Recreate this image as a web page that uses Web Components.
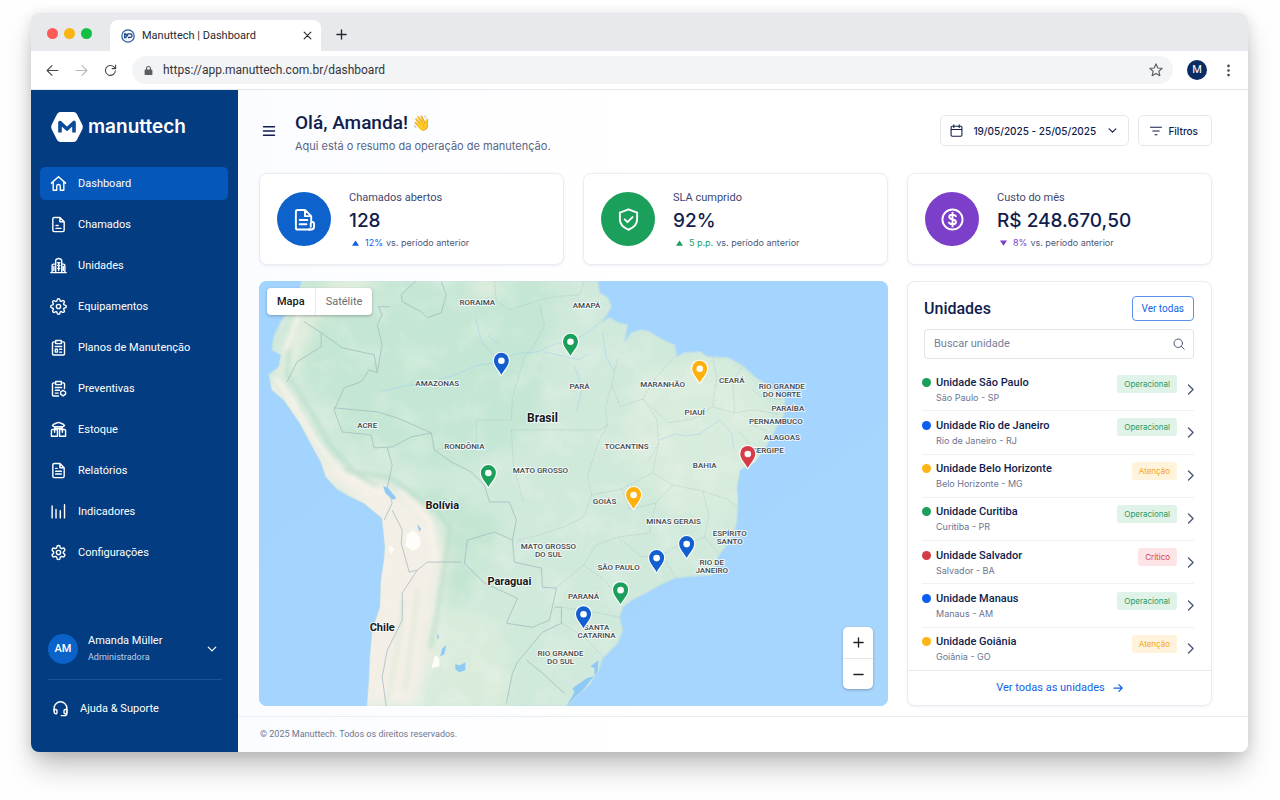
<!DOCTYPE html>
<html lang="pt-BR">
<head>
<meta charset="utf-8">
<meta name="viewport" content="width=device-width, initial-scale=1">
<title>Manuttech | Dashboard</title>
<style>
  :root {
    --font-ui: Roboto, "Noto Sans", sans-serif;
    --font-alt: Inter, "Noto Sans", sans-serif;
    --navy: #101d4d;
    --slate: #5a6585;
    --line: #e9ecf3;
    --blue: #0b5ff0;
    --blue-deep: #0d63cb;
    --green: #1ba05b;
    --amber: #fdb515;
    --red: #d13c46;
    --purple: #7c3fc9;
    --sidebar: #033c80;
  }
  * { box-sizing: border-box; }
  body {
    margin: 0;
    min-height: 100vh;
    padding: 13px 32px 48px 31px;
    background: #fefefe;
    color: var(--navy);
    font: 11px/16px var(--font-ui);
  }
</style>
</head>
<body>
<browser-window>
  <browser-tabs slot="tabs">Manuttech | Dashboard</browser-tabs>
  <browser-toolbar slot="toolbar" url="https://app.manuttech.com.br/dashboard"></browser-toolbar>
  <app-shell>
    <app-sidebar slot="sidebar">
      <nav-item icon="home" active>Dashboard</nav-item>
      <nav-item icon="ticket">Chamados</nav-item>
      <nav-item icon="buildings">Unidades</nav-item>
      <nav-item icon="gear8">Equipamentos</nav-item>
      <nav-item icon="plan">Planos de Manutenção</nav-item>
      <nav-item icon="preventive">Preventivas</nav-item>
      <nav-item icon="stock">Estoque</nav-item>
      <nav-item icon="report">Relatórios</nav-item>
      <nav-item icon="bars">Indicadores</nav-item>
      <nav-item icon="gear6">Configurações</nav-item>
    </app-sidebar>
    <page-header slot="header">
      <span slot="title">Olá, Amanda!</span>
      <span slot="subtitle">Aqui está o resumo da operação de manutenção.</span>
    </page-header>
    <stat-card tone="blue" icon="doc" trend="up">
      <span slot="label">Chamados abertos</span>
      <span slot="value">128</span>
      <span slot="delta">12%</span>
    </stat-card>
    <stat-card tone="green" icon="shield" trend="up">
      <span slot="label">SLA cumprido</span>
      <span slot="value">92%</span>
      <span slot="delta">5 p.p.</span>
    </stat-card>
    <stat-card tone="purple" icon="money" trend="down">
      <span slot="label">Custo do mês</span>
      <span slot="value">R$ 248.670,50</span>
      <span slot="delta">8%</span>
    </stat-card>
    <units-map></units-map>
    <units-panel>
      <unit-row tone="green" status="ok"><span slot="name">Unidade São Paulo</span><span slot="place">São Paulo - SP</span>Operacional</unit-row>
      <unit-row tone="blue" status="ok"><span slot="name">Unidade Rio de Janeiro</span><span slot="place">Rio de Janeiro - RJ</span>Operacional</unit-row>
      <unit-row tone="amber" status="warn"><span slot="name">Unidade Belo Horizonte</span><span slot="place">Belo Horizonte - MG</span>Atenção</unit-row>
      <unit-row tone="green" status="ok"><span slot="name">Unidade Curitiba</span><span slot="place">Curitiba - PR</span>Operacional</unit-row>
      <unit-row tone="red" status="crit"><span slot="name">Unidade Salvador</span><span slot="place">Salvador - BA</span>Crítico</unit-row>
      <unit-row tone="blue" status="ok"><span slot="name">Unidade Manaus</span><span slot="place">Manaus - AM</span>Operacional</unit-row>
      <unit-row tone="amber" status="warn"><span slot="name">Unidade Goiânia</span><span slot="place">Goiânia - GO</span>Atenção</unit-row>
    </units-panel>
    <span slot="footer">© 2025 Manuttech. Todos os direitos reservados.</span>
  </app-shell>
</browser-window>

<script>
const BASE = `
  *, *::before, *::after { box-sizing: border-box; }
  button, input, select { font: inherit; color: inherit; margin: 0; padding: 0; border: 0; background: none; }
  button { cursor: pointer; }
  a { color: inherit; text-decoration: none; }
`;

function define(name, render, wire) {
  customElements.define(name, class extends HTMLElement {
    connectedCallback() {
      if (this.shadowRoot) return;
      const root = this.attachShadow({ mode: 'open' });
      const tpl = document.createElement('template');
      const [css, html] = render(this);
      tpl.innerHTML = `<style>${BASE}${css}</style>${html}`;
      root.append(tpl.content.cloneNode(true));
      if (wire) wire(this, root);
    }
  });
}

const GEAR8 = 'M19.4 15a1.65 1.65 0 0 0 .33 1.82l.06.06a2 2 0 0 1 0 2.83 2 2 0 0 1-2.83 0l-.06-.06a1.65 1.65 0 0 0-1.82-.33 1.65 1.65 0 0 0-1 1.51V21a2 2 0 0 1-2 2 2 2 0 0 1-2-2v-.09A1.65 1.65 0 0 0 9 19.4a1.65 1.65 0 0 0-1.82.33l-.06.06a2 2 0 0 1-2.83 0 2 2 0 0 1 0-2.83l.06-.06a1.65 1.65 0 0 0 .33-1.82 1.65 1.65 0 0 0-1.51-1H3a2 2 0 0 1-2-2 2 2 0 0 1 2-2h.09A1.65 1.65 0 0 0 4.6 9a1.65 1.65 0 0 0-.33-1.82l-.06-.06a2 2 0 0 1 0-2.83 2 2 0 0 1 2.83 0l.06.06a1.65 1.65 0 0 0 1.82.33H9a1.65 1.65 0 0 0 1-1.51V3a2 2 0 0 1 2-2 2 2 0 0 1 2 2v.09a1.65 1.65 0 0 0 1 1.51 1.65 1.65 0 0 0 1.82-.33l.06-.06a2 2 0 0 1 2.83 0 2 2 0 0 1 0 2.83l-.06.06a1.65 1.65 0 0 0-.33 1.82V9a1.65 1.65 0 0 0 1.51 1H21a2 2 0 0 1 2 2 2 2 0 0 1-2 2h-.09a1.65 1.65 0 0 0-1.51 1z';
const GEAR6 = 'M12.22 2h-.44a2 2 0 0 0-2 2v.18a2 2 0 0 1-1 1.73l-.43.25a2 2 0 0 1-2 0l-.15-.08a2 2 0 0 0-2.73.73l-.22.38a2 2 0 0 0 .73 2.73l.15.1a2 2 0 0 1 1 1.72v.51a2 2 0 0 1-1 1.74l-.15.09a2 2 0 0 0-.73 2.73l.22.38a2 2 0 0 0 2.73.73l.15-.08a2 2 0 0 1 2 0l.43.25a2 2 0 0 1 1 1.73V20a2 2 0 0 0 2 2h.44a2 2 0 0 0 2-2v-.18a2 2 0 0 1 1-1.73l.43-.25a2 2 0 0 1 2 0l.15.08a2 2 0 0 0 2.73-.73l.22-.39a2 2 0 0 0-.73-2.73l-.15-.08a2 2 0 0 1-1-1.74v-.5a2 2 0 0 1 1-1.74l.15-.09a2 2 0 0 0 .73-2.73l-.22-.38a2 2 0 0 0-2.73-.73l-.15.08a2 2 0 0 1-2 0l-.43-.25a2 2 0 0 1-1-1.73V4a2 2 0 0 0-2-2z';

const ICONS = {
  home: '<path d="M2 11.5 12 2.5l10 9M4.5 9.5V21.5h5V16a2.5 2.5 0 0 1 5 0v5.5h5V9.5"/>',
  ticket: '<path d="M14 2H6a2 2 0 0 0-2 2v16a2 2 0 0 0 2 2h12a2 2 0 0 0 2-2V8zM14 2v6h6M8.5 13.5h3M8.5 17.5h7"/>',
  buildings: '<path d="M1 22h22M8 22V5a2 2 0 0 1 1.2-1.8L12 2l3.2 1.2A2 2 0 0 1 16.5 5V22M3 22V12a2 2 0 0 1 2-2h3M16.5 10H19a2 2 0 0 1 2 2v10M5.5 13.5V19M18.8 13.5V19"/><path d="M10.8 8h3M10.8 12h3M10.8 16h3M12.3 8v11"/>',
  gear8: `<circle cx="12" cy="12" r="3"/><path d="${GEAR8}"/>`,
  gear6: `<circle cx="12" cy="12" r="3"/><path d="${GEAR6}"/>`,
  plan: '<path d="M8 4H5a1.5 1.5 0 0 0-1.5 1.5V21A1.5 1.5 0 0 0 5 22.5h14a1.5 1.5 0 0 0 1.5-1.5V5.5A1.5 1.5 0 0 0 19 4h-3M8 2h8v4.5H8zM7.5 10.5h9M7.5 14.5h3v4h-3zM13.5 14.5h3M13.5 18.5h3"/>',
  preventive: '<path d="M8 4H5a1.5 1.5 0 0 0-1.5 1.5V21A1.5 1.5 0 0 0 5 22.5h7M20.5 12V5.5A1.5 1.5 0 0 0 19 4h-3M8 2h8v4.5H8zM7.5 10.5h9M7.5 14.5h6M7.5 18.5h4"/><path d="M18.5 14.5 22 17v3l-3.5 2.5L15 20v-3z"/>',
  stock: '<path d="M3.5 6.5q1-2 4-3L12 2l4.5 1.5q3 1 4 3-1 1.5-3 1.5h-11q-2 0-3-1.5zM6.5 8v2.5h11V8M3.5 12h7v9.5H2v-8a1.5 1.5 0 0 1 1.5-1.5zM13.5 12h7a1.5 1.5 0 0 1 1.5 1.5v8h-8.5zM6.5 12v4M17.5 12v4"/>',
  report: '<path d="M14 2H6a2 2 0 0 0-2 2v16a2 2 0 0 0 2 2h12a2 2 0 0 0 2-2V8zM14 2v6h6M8 9h2M8 13h8M8 17h8"/>',
  bars: '<path d="M3 4v17M8.5 9v12M14.5 11v10M20.5 2.5V21"/>',
  headset: '<path d="M3 15v-3.5a9 9 0 0 1 18 0V19a3 3 0 0 1-3 3h-5"/><path d="M3 13.5h2.5A1.5 1.5 0 0 1 7 15v3a1.5 1.5 0 0 1-1.5 1.5A2.5 2.5 0 0 1 3 17zM21 13.5h-2.5A1.5 1.5 0 0 0 17 15v3a1.5 1.5 0 0 0 1.5 1.5A2.5 2.5 0 0 0 21 17z"/>',
  down: '<path d="m3 7.5 9 9 9-9"/>',
  right: '<path d="m12 2 10 10-10 10"/>',
  arrow: '<path d="M2 12h20M14 4l8 8-8 8"/>',
  back: '<path d="M22 12H2M11 3l-9 9 9 9"/>',
  forward: '<path d="M2 12h20M13 3l9 9-9 9"/>',
  reload: '<path d="M21 12.5A9.2 9.2 0 1 1 18.5 5.5L21 8M21.5 2v6.5H15"/>',
  lock: '<path fill="currentColor" stroke="none" d="M5 10h1.5V7.5a5.5 5.5 0 0 1 11 0V10H19a1.5 1.5 0 0 1 1.5 1.5v9A1.5 1.5 0 0 1 19 22H5a1.5 1.5 0 0 1-1.5-1.5v-9A1.5 1.5 0 0 1 5 10zm4 0h6V7.5a3 3 0 0 0-6 0z"/>',
  star: '<path d="m12 1.5 3.1 7 7.5.7-5.7 5 1.7 7.5L12 17.8l-6.6 3.9 1.7-7.5-5.7-5 7.5-.7z"/>',
  kebab: '<g fill="currentColor" stroke="none"><circle cx="12" cy="3.5" r="2.4"/><circle cx="12" cy="12" r="2.4"/><circle cx="12" cy="20.5" r="2.4"/></g>',
  close: '<path d="m3 3 18 18M21 3 3 21"/>',
  plus: '<path d="M12 2v20M2 12h20"/>',
  minus: '<path d="M2 12h20"/>',
  menu: '<path d="M1 3.5h22M1 12h22M1 20.5h22"/>',
  calendar: '<path d="M4 4h16a2 2 0 0 1 2 2V20.5a2 2 0 0 1-2 2H4a2 2 0 0 1-2-2V6a2 2 0 0 1 2-2zM2 10h20M7 1.5v5M17 1.5v5"/>',
  filter: '<path d="M1 4.5h22M5.5 12h13M10 19.5h4"/>',
  search: '<circle cx="10.5" cy="10.5" r="8.5"/><path d="m17 17 5.5 5.5"/>',
  doc: '<path d="M12 2H5a2 2 0 0 0-2 2v16.5a2 2 0 0 0 2 2h13M12.5 2 19 8.5v5M12.5 2v6.5H19M7 12.5h8M7 17h7"/><path d="M16.5 22.5h2.3a3.2 3.2 0 0 0 3.2-3.2V16a1.8 1.8 0 0 0-3.5 0v3.5"/>',
  shield: '<path d="M12 1.5 21 4.8v7c0 5-3.5 8.7-9 10.9-5.5-2.2-9-5.9-9-10.9v-7z"/><path d="m8 11.8 3 3 5.2-5.3"/>',
  money: '<circle cx="12" cy="12" r="10.5"/><path d="M15.5 8.5c-.7-1-1.9-1.5-3.5-1.5-2 0-3.4.9-3.4 2.4 0 3.4 7 1.7 7 5.1 0 1.6-1.5 2.5-3.6 2.5-1.7 0-3.1-.6-3.8-1.8M12 4.8v14.4"/>'
};

define('app-icon', el => [`
  :host { display: inline-flex; flex: none; width: var(--size, 16px); height: var(--size, 16px); }
  svg { width: 100%; height: 100%; fill: none; stroke: currentColor; stroke-width: var(--stroke, 2); stroke-linecap: round; stroke-linejoin: round; overflow: visible; }
`, `<svg viewBox="0 0 24 24" aria-hidden="true">${ICONS[el.getAttribute('name')] || ''}</svg>`]);

define('browser-window', () => [`
  :host {
    display: flex; flex-direction: column; min-height: calc(100vh - 61px);
    border-radius: 8px; overflow: hidden; background: #fff;
    box-shadow: 0 18px 28px -4px rgba(20, 20, 25, .26), 0 2px 14px rgba(20, 20, 25, .12);
  }
`, `<slot name="tabs"></slot><slot name="toolbar"></slot><slot></slot>`]);

define('browser-tabs', () => [`
  :host { display: flex; height: 38px; padding: 7px 16px 0; background: #e8e9ec; color: #26292e; }
  .lights { display: flex; gap: 6px; width: 63px; padding-top: 8px; }
  .lights i { width: 11px; height: 11px; border-radius: 50%; background: #fc5b57; }
  .lights i:nth-child(2) { background: #f9b514; }
  .lights i:nth-child(3) { background: #14c044; }
  .tab { display: flex; align-items: center; gap: 7px; width: 211px; padding: 0 9px 0 11px; border-radius: 8px 8px 0 0; background: #fff; }
  .tab span { flex: 1; }
  .tab svg { width: 14px; height: 14px; flex: none; }
  button { display: flex; align-items: center; justify-content: center; width: 10px; --size: 9px; --stroke: 3; }
  .new { width: 40px; padding-bottom: 2px; --size: 11px; --stroke: 3; }
`, `
  <div class="lights" aria-hidden="true"><i></i><i></i><i></i></div>
  <div class="tab">
    <svg viewBox="0 0 14 14" aria-hidden="true"><circle cx="7" cy="7" r="6.2" fill="#f4f8fd" stroke="#2a5a9c" stroke-width="1.2"/><path d="M3.7 9.3V4.9h1l1.3 2 1-2h2.4a1.5 1.5 0 0 1 0 3.4H7.6v1M5 7.5v1.8" fill="none" stroke="#17427f" stroke-width="1.3"/></svg>
    <span><slot></slot></span>
    <button aria-label="Fechar aba"><app-icon name="close"></app-icon></button>
  </div>
  <button class="new" aria-label="Nova aba"><app-icon name="plus"></app-icon></button>
`]);

define('browser-toolbar', el => [`
  :host { display: flex; align-items: center; gap: 14px; height: 39px; padding: 0 12px 0 14px; border-bottom: 1px solid #e3e6ea; background: #fff; color: #45494f; --size: 13px; }
  button { display: flex; width: 15px; justify-content: center; }
  .off { color: #b4b8bd; }
  .url { display: flex; flex: 1; align-items: center; gap: 9px; height: 28px; padding: 0 10px 0 11px; border-radius: 14px; background: #f3f4f6; }
  .url app-icon { --size: 11px; color: #5b5f65; }
  .url input { flex: 1; min-width: 0; color: #33363b; outline: none; font-size: 12px; }
  .url button app-icon { --size: 14px; --stroke: 2; }
  .me { width: 20px; height: 20px; align-items: center; border-radius: 50%; background: #0a2c62; color: #fff; }
`, `
  <button aria-label="Voltar"><app-icon name="back"></app-icon></button>
  <button class="off" aria-label="Avançar"><app-icon name="forward"></app-icon></button>
  <button aria-label="Recarregar"><app-icon name="reload"></app-icon></button>
  <div class="url">
    <app-icon name="lock"></app-icon>
    <input type="text" aria-label="Endereço" value="${el.getAttribute('url')}">
    <button aria-label="Favoritar"><app-icon name="star"></app-icon></button>
  </div>
  <button class="me" aria-label="Perfil M">M</button>
  <button aria-label="Mais opções"><app-icon name="kebab"></app-icon></button>
`]);

define('app-shell', () => [`
  :host { display: grid; grid-template-columns: 207px minmax(0, 1fr); flex: 1; }
  main { display: flex; flex-direction: column; background: linear-gradient(90deg, #fbfcff, #fff 40%); }
  .grid {
    flex: 1; display: grid; grid-template-columns: repeat(3, minmax(0, 1fr)); grid-template-rows: 92px 1fr;
    gap: 16px 19px; padding: 0 36px 10px 21px;
  }
  footer { height: 36px; padding: 0 22px; border-top: 1px solid #e9eef6; color: #6d7690; font: 9px/34px var(--font-ui); }
`, `
  <slot name="sidebar"></slot>
  <main>
    <slot name="header"></slot>
    <div class="grid"><slot></slot></div>
    <footer><slot name="footer"></slot></footer>
  </main>
`]);

define('app-sidebar', () => [`
  :host { display: flex; flex-direction: column; background: var(--sidebar); color: #fff; }
  .brand { display: flex; align-items: center; gap: 5px; padding: 22px 20px 25px; font: 600 19px/30px var(--font-alt); }
  .brand svg { width: 32px; height: 30px; }
  nav { display: flex; flex-direction: column; gap: 8px; padding: 0 10px 0 9px; }
  .bottom { margin-top: auto; padding: 0 16px 35px 17px; }
  .user { display: flex; align-items: center; gap: 10px; width: 100%; padding-bottom: 14px; border-bottom: 1px solid #1c5398; text-align: left; }
  .avatar { display: grid; place-items: center; width: 30px; height: 30px; border-radius: 50%; background: #0b62c8; font-weight: 500; }
  .who { flex: 1; }
  .who small { display: block; font: 9px/16px var(--font-ui); color: #bdd0ea; }
  .user app-icon { --size: 10px; --stroke: 3; margin-right: 5px; }
  .help { display: flex; align-items: center; gap: 11px; padding: 20px 4px 0; --size: 17px; }
`, `
  <div class="brand">
    <svg viewBox="0 0 32 30" aria-hidden="true"><path fill="#fff" d="M9.5 0h13q2.2 0 3.4 2l5.4 10.8q1 2.2 0 4.4L25.9 28q-1.2 2-3.4 2h-13q-2.2 0-3.4-2L.7 17.2q-1-2.2 0-4.4L6.1 2Q7.3 0 9.5 0z"/><path d="M9 20.5V10.5l7 6.5 7-6.5v10" fill="none" stroke="#0a4a9a" stroke-width="3.6" stroke-linejoin="round"/></svg>
    <span>manuttech</span>
  </div>
  <nav aria-label="Principal"><slot></slot></nav>
  <div class="bottom">
    <button class="user">
      <span class="avatar">AM</span>
      <span class="who">Amanda Müller<small>Administradora</small></span>
      <app-icon name="down"></app-icon>
    </button>
    <a class="help" href="#ajuda"><app-icon name="headset"></app-icon><span>Ajuda &amp; Suporte</span></a>
  </div>
`]);

define('nav-item', el => [`
  :host { display: block; }
  a { display: flex; align-items: center; gap: 11px; height: 33px; padding: 0 10px; border-radius: 5px; --size: 17px; }
  :host([active]) a { background: #0558b9; }
`, `<a href="#${el.getAttribute('icon')}" ${el.hasAttribute('active') ? 'aria-current="page"' : ''}><app-icon name="${el.getAttribute('icon')}"></app-icon><span><slot></slot></span></a>`]);

define('page-header', () => [`
  :host { display: flex; align-items: flex-start; height: 83px; padding: 21px 36px 0 25px; }
  .menu { display: flex; align-items: center; width: 32px; height: 39px; --size: 12px; --stroke: 3; }
  h1 { margin: 0; display: flex; align-items: center; gap: 4px; font: 500 19px/24px var(--font-ui); }
  .wave { font-size: 15px; }
  p { margin: 3px 0 0; color: var(--slate); font: 11px/16px var(--font-alt); }
  .text { flex: 1; }
  .actions { display: flex; gap: 9px; padding-top: 4px; font-family: var(--font-alt); font-size: 10px; font-weight: 500; }
  .box { display: flex; align-items: center; height: 31px; border: 1px solid #e4e7ee; border-radius: 5px; background: #fff; }
  label { gap: 10px; padding: 0 11px 0 9px; --size: 13px; }
  select { appearance: none; width: 125px; outline: none; }
  label .caret { --size: 9px; --stroke: 3; }
  .filter { gap: 6px; padding: 0 13px 0 11px; --size: 12px; }
`, `
  <button class="menu" aria-label="Abrir menu"><app-icon name="menu"></app-icon></button>
  <div class="text">
    <h1><slot name="title"></slot><span class="wave">👋</span></h1>
    <p><slot name="subtitle"></slot></p>
  </div>
  <div class="actions">
    <label class="box">
      <app-icon name="calendar"></app-icon>
      <select aria-label="Período"><option>19/05/2025 - 25/05/2025</option></select>
      <app-icon class="caret" name="down"></app-icon>
    </label>
    <button class="box filter"><app-icon name="filter"></app-icon>Filtros</button>
  </div>
`]);

define('stat-card', el => [`
  :host { display: flex; align-items: center; gap: 18px; padding: 0 17px; border: 1px solid var(--line); border-radius: 8px; background: #fff; box-shadow: 0 1px 3px rgba(30, 50, 100, .07); }
  .disc { display: grid; place-items: center; width: 54px; height: 54px; border-radius: 50%; background: var(--${el.getAttribute('tone')}); color: #fff; --size: 23px; --stroke: 2; }
  :host([tone="blue"]) .disc { background: var(--blue-deep); }
  .text { padding-top: 2px; }
  .label { color: #3c4870; }
  .value { font: 500 19px/30px var(--font-alt); }
  .delta { display: flex; align-items: center; gap: 3px; padding-left: 3px; font: 9px/14px var(--font-alt); color: #4c5778; }
  .delta svg { width: 7px; height: 6px; margin-right: 3px; fill: var(--${el.getAttribute('tone')}); }
  .delta b { font-weight: 400; color: var(--${el.getAttribute('tone')}); }
`, `
  <div class="disc"><app-icon name="${el.getAttribute('icon')}"></app-icon></div>
  <div class="text">
    <div class="label"><slot name="label"></slot></div>
    <div class="value"><slot name="value"></slot></div>
    <div class="delta"><svg viewBox="0 0 8 6" aria-hidden="true"><path d="${el.getAttribute('trend') === 'up' ? 'M4 0 8 6H0z' : 'M0 0h8L4 6z'}"/></svg><b><slot name="delta"></slot></b><span>vs. período anterior</span></div>
  </div>
`]);

/* Map drawing: coordinates share one canvas, origin at 260,281. */
const LAND = 'M303 281 298 300 286 316 282 322 275 336 273 350 282 355 280 367 270 375 273 390 285 400 302 425 312 444 322 462 327 477 338 489 352 497 365 503 383 518 386 547 385 560 382 580 381 607 376 622 373 633 371 657 370 680 368 706H567L575 697 590 684 599 670 603 658 618 643 623 630 620 617 623 607 632 600 648 592 662 584 675 578 692 576 712 575 718 557 726 546 732 537 737 523 738 503 737 488 740 470 755 462 767 445 778 425 784 415 785 400 775 390 764 383 755 377 742 365 728 358 708 357 700 352 685 353 677 357 675 345 667 342 658 337 650 332 642 330 632 333 625 342 628 325 619 323 610 318 603 322 612 307 608 298 600 293 598 281Z';
const BORDERS = [
  'M417 281 402 295 403 302 422 312 428 318 442 313 447 295 442 282',
  'M390 307h-11l4 8-5 10 5 20-5 28-8-3-8 12-17 6-10 22 8 22 29 3 3 13 18-1 19-10 20-4 3 17 17 12 20 10 13 13 3 10 2 7h20l7 18-4 20 2 22 27 6 1 19 14 1-7 32-17 7-26-4 11-25-33-15-20-20 3-23 27-8 18 8',
  'M305 322l17 11 21 15 32 7 3 18M288 382l10-20 24-15v-14',
  'M335 408l43 4 20 6 34 15',
  'M388 448l5 17-5 23 5 15-8 17M393 510l10 20-1 13 8 29 8-2 10-8h34',
  'M418 570l-15 23v27l-15 30-5 27 4 29',
  'M507 703l6-30 5-11 25-30 19-9v-16h-7M527 660l15 12 23 21'
];
const STATES = [
  'M525 357l-12 41-1 22h-35v23l-42 7', 'M495 281l2 21 13 8 25-8 20-5 25-2 5-14', 'M540 305l5 20-10 20-10 12',
  'M512 430h88l8-5M608 425l-8 15-12 35 4 20-8 22-20 10-24 8-22 5', 'M612 385l-6 22 2 18M675 357l-20 22-12 20-22 8-9-22 6-26',
  'M643 399l14 20 2 24 -10 18M643 399l26 24 24-4 20-12 4-30-4-20', 'M713 407l22 6 18-3 25 4M735 413l-2-30 10-18M753 390l10 8 20 2',
  'M659 443l-6 30 20 12 30 6 24 8 10 8', 'M592 495l30-6 31-16M622 489l8 20 26-6 17-18', 'M703 491l6 24-4 22 14 16M656 503l-6 30 -32 4-22 8-12 20',
  'M618 537l24 20 20-2 14 22M705 537l-30 10-14 9', 'M584 565l-28 23M584 565l20 14 20 24M562 607l28 4 30 6M562 623l20 12 22 22',
  'M753 425l14 6M740 432l16 20', 'M512 430l2 36 10 36'
];
const RIVERS = ['M382 392l22-6 30-4 24-8 18-8 24-4 16-8 22-2 18-8 20-4 16-10 16-14', 'M501 345l-12-8 4-4M500 362l-18-20-6-24', 'M545 352l34 8 10-6M575 366l8 22-6 24', 'M660 440l16-6 10 2 14-2 20-14 12 14 2 16', 'M615 372l-8-14-4-24'];
const LABELS = [
  [478, 305, 'RORAIMA'], [587, 308, 'AMAPÁ'], [438, 386, 'AMAZONAS'], [580, 389, 'PARÁ'], [663, 387, 'MARANHÃO'], [732, 383, 'CEARÁ'],
  [782, 389, 'RIO GRANDE'], [782, 397, 'DO NORTE'], [788, 411, 'PARAÍBA'], [776, 424, 'PERNAMBUCO'], [782, 440, 'ALAGOAS'], [768, 453, 'SERGIPE'],
  [695, 415, 'PIAUÍ'], [627, 449, 'TOCANTINS'], [705, 468, 'BAHIA'], [605, 504, 'GOIÁS'], [541, 473, 'MATO GROSSO'], [465, 449, 'RONDÔNIA'],
  [368, 428, 'ACRE'], [549, 549, 'MATO GROSSO'], [549, 557, 'DO SUL'], [674, 524, 'MINAS GERAIS'], [730, 536, 'ESPÍRITO'], [730, 544, 'SANTO'],
  [712, 565, 'RIO DE'], [712, 573, 'JANEIRO'], [619, 570, 'SÃO PAULO'], [584, 599, 'PARANÁ'], [597, 630, 'SANTA'], [597, 638, 'CATARINA'],
  [561, 656, 'RIO GRANDE'], [561, 664, 'DO SUL']
];
const COUNTRIES = [[543, 422, 'Brasil'], [443, 509, 'Bolívia'], [510, 585, 'Paraguai'], [383, 631, 'Chile']];
const PINS = [
  [502, 375, '#145fd0'], [571, 356, '#1ba05b'], [700, 383, '#fdb10d'], [489, 487, '#1ba05b'], [748, 468, '#d63d46'],
  [634, 509, '#fdb10d'], [687, 558, '#145fd0'], [657, 572, '#145fd0'], [621, 604, '#1ba05b'], [584, 628, '#145fd0']
];
const lines = list => list.map(d => `<path d="${d}"/>`).join('');
const texts = list => list.map(([x, y, t]) => `<text x="${x}" y="${y}">${t}</text>`).join('');

define('units-map', () => [`
  :host { display: block; position: relative; grid-column: span 2; min-height: 320px; border-radius: 8px; overflow: hidden; background: #a5d6fe; }
  .canvas { position: absolute; inset: 0; width: 100%; height: 100%; }
  text { text-anchor: middle; paint-order: stroke; stroke: rgba(255, 255, 255, .75); stroke-width: 2px; stroke-linejoin: round; font-family: var(--font-ui); }
  .states text { font-size: 8px; font-weight: 500; fill: #42484d; }
  .countries text { font-size: 11px; font-weight: 700; fill: #15181b; }
  .countries text:first-child { font-size: 12px; }
  .modes, .zoom { position: absolute; display: flex; background: #fff; border-radius: 4px; box-shadow: 0 1px 3px rgba(0, 0, 0, .28); }
  .modes { top: 7px; left: 8px; height: 27px; color: #6a6d72; }
  .modes button { padding: 0 10px; }
  .modes button + button { border-left: 1px solid #ececee; }
  .modes [aria-pressed="true"] { color: #16181b; font-weight: 500; }
  .zoom { right: 15px; bottom: 17px; flex-direction: column; width: 30px; border-radius: 5px; color: #222; --size: 11px; --stroke: 3; }
  .zoom button { display: grid; place-items: center; height: 31px; }
  .zoom button + button { border-top: 1px solid #e6e6e8; }
`, `
  <svg class="canvas" viewBox="260 281 628 425" preserveAspectRatio="xMidYMid slice" role="img" aria-label="Mapa das unidades">
    <defs>
      <clipPath id="land"><path d="${LAND}"/></clipPath>
      <filter id="soft" x="-30%" y="-30%" width="160%" height="160%"><feGaussianBlur stdDeviation="7"/></filter>
      <filter id="soft2" x="-30%" y="-30%" width="160%" height="160%"><feGaussianBlur stdDeviation="2"/></filter>
      <filter id="relief" x="0" y="0" width="100%" height="100%"><feTurbulence type="fractalNoise" baseFrequency=".035" numOctaves="5" seed="8"/><feColorMatrix values="0 0 0 0 1  0 0 0 0 .98  0 0 0 0 .92  2.6 0 0 0 -1.1"/></filter>
      <linearGradient id="sea" x2="1" y2="1"><stop offset="0" stop-color="#a0d3ff"/><stop offset="1" stop-color="#a9d7fd"/></linearGradient>
      <g id="pin"><path d="M0 0C-2.5-5-7.5-8.8-7.5-14.5a7.5 7.5 0 0 1 15 0C7.5-8.8 2.5-5 0 0z" stroke="#fff" stroke-width="2.2" paint-order="stroke" stroke-linejoin="round"/><circle cy="-14" r="3.3" fill="#fff"/></g>
    </defs>
    <rect x="200" y="200" width="800" height="600" fill="url(#sea)"/>
    <path d="${LAND}" fill="#cfe9db" stroke="#c0e0e4" stroke-width="1.5"/>
    <g clip-path="url(#land)">
      <g filter="url(#soft)">
        <path fill="#c4e6d4" d="M300 281H560L530 440 440 470 350 440 300 370z"/>
        <path fill="#d8ecdd" d="M640 370l60-10 50 20 20 30-20 50-20 60-60-10-50-60z"/>
        <path fill="#c3e5d2" d="M400 490l50 0 50 30-20 60-30 40-10 60-20-30 10-80z"/>
        <path fill="#d9ecdc" d="M440 600l60 20 10 90H430z"/>
        <path fill="#f3efe6" d="M262 375l30 25 34 60 54 20 50 30 18 44-12 60-5 50-14 42h-60V500l-100-60z"/>
        <path fill="#e4eedd" d="M330 281h60l-30 10-40 22-30 70-16-10 30-60z"/>
        <path fill="#e9efdf" d="M480 281h20l-8 12h-26z"/>
      </g>
      <rect x="260" y="281" width="628" height="425" filter="url(#relief)" opacity=".2"/>
      <g filter="url(#soft2)" fill="none" stroke-width="4">
        <path stroke="#b4dbc6" opacity=".7" d="M292 330l-4 45 20 30 24 42 24 26 22 14M345 470l46 8 46 32 14 18-6 40-8 50-6 30"/>
        <path stroke="#fbf4ea" d="M305 300l-18 50M276 378l10 12 30 50 26 34 44 20M400 490l30 30 6 40"/>
        <path stroke="#dfe9d8" stroke-width="3" d="M404 600l-6 50-10 50M418 590l-4 40-8 60"/>
      </g>
      <path fill="#fffdf9" d="M408 534l6-4 7 8 0 8-7 5-8-5zM391 545l4 4-3 5-3-5zM436 655l4 3 0 8-8 2z"/>
      <g fill="none" stroke="#9fb9bd" stroke-width=".8" opacity=".9">${lines(BORDERS)}</g>
      <g fill="none" stroke="#a8c2c0" stroke-width=".7" stroke-dasharray="3 1" opacity=".6">${lines(STATES)}</g>
      <g fill="none" stroke="#a3d3ef" stroke-width=".9" opacity=".6">${lines(RIVERS)}</g>
      <g fill="#8fc9f5"><path d="M384 486l5 2 8 10-3 2-8-7zM418 524l4 5-2 3zM443 648l4-3-2 9-4 2zM456 664l5 1 5-3v8l-6 2-4-3zM438 633l2 4-2 2zM567 706l8-14-2-4 14-10 8-2 0-8-4-2 8-6-1 12-10 12-8 10z"/></g>
    </g>
    <g class="states">${texts(LABELS)}</g>
    <g class="countries">${texts(COUNTRIES)}</g>
    ${PINS.map(([x, y, c]) => `<use href="#pin" x="${x}" y="${y}" fill="${c}"/>`).join('')}
  </svg>
  <div class="modes"><button aria-pressed="true">Mapa</button><button aria-pressed="false">Satélite</button></div>
  <div class="zoom"><button aria-label="Aproximar"><app-icon name="plus"></app-icon></button><button aria-label="Afastar"><app-icon name="minus"></app-icon></button></div>
`], (el, root) => {
  const modes = [...root.querySelectorAll('.modes button')];
  modes.forEach(b => b.addEventListener('click', () => modes.forEach(o => o.setAttribute('aria-pressed', String(o === b)))));
});

define('units-panel', () => [`
  :host { display: flex; flex-direction: column; border: 1px solid var(--line); border-radius: 8px; background: #fff; box-shadow: 0 1px 3px rgba(30, 50, 100, .07); }
  header { display: flex; align-items: center; justify-content: space-between; padding: 14px 17px 0 16px; }
  h2 { margin: 0; font: 500 16px/24px var(--font-ui); }
  header button { height: 25px; padding: 0 9px; border: 1px solid #5b92f0; border-radius: 4px; color: #1263e8; font-size: 10px; }
  .search { display: flex; align-items: center; height: 30px; margin: 8px 17px 9px 16px; padding: 0 8px 0 9px; border: 1px solid #e1e4eb; border-radius: 4px; color: #4d5878; --size: 12px; }
  input { flex: 1; min-width: 0; outline: none; }
  input::placeholder { color: #75809c; opacity: 1; }
  .list { flex: 1; display: flex; flex-direction: column; padding: 0 17px 0 14px; }
  footer { border-top: 1px solid #e6eaf2; }
  footer a { display: flex; align-items: center; justify-content: center; gap: 8px; height: 34px; color: #1263e8; --size: 10px; --stroke: 3; }
`, `
  <header><h2>Unidades</h2><button>Ver todas</button></header>
  <label class="search"><input type="search" placeholder="Buscar unidade" aria-label="Buscar unidade"><app-icon name="search"></app-icon></label>
  <div class="list"><slot></slot></div>
  <footer><a href="#unidades">Ver todas as unidades<app-icon name="arrow"></app-icon></a></footer>
`]);

define('unit-row', el => {
  const chip = { ok: ['#dff3e8', '#2b9a62'], warn: ['#fff3dc', '#f3a524'], crit: ['#fde5e7', '#d2404a'] }[el.getAttribute('status')];
  return [`
  :host { display: flex; flex: 1; }
  :host(:not(:last-child)) { border-bottom: 1px solid #eef1f6; }
  a { flex: 1; display: flex; align-items: center; }
  .dot { width: 9px; height: 9px; margin: 0 5px 14px 0; border-radius: 50%; background: var(--${el.getAttribute('tone')}); }
  .text { flex: 1; padding-top: 1px; }
  .name { font-weight: 500; line-height: 16px; }
  .place { font: 9px/14px var(--font-alt); color: #6b7592; }
  .chip { margin: 0 6px 10px 0; padding: 0 7px; border-radius: 3px; background: ${chip[0]}; color: ${chip[1]}; font: 8px/18px var(--font-alt); }
  app-icon { --size: 11px; --stroke: 3; color: #4d5878; }
`, `
  <a href="#unidade">
    <span class="dot"></span>
    <div class="text"><div class="name"><slot name="name"></slot></div><div class="place"><slot name="place"></slot></div></div>
    <span class="chip"><slot></slot></span>
    <app-icon name="right"></app-icon>
  </a>`];
});
</script>
</body>
</html>
